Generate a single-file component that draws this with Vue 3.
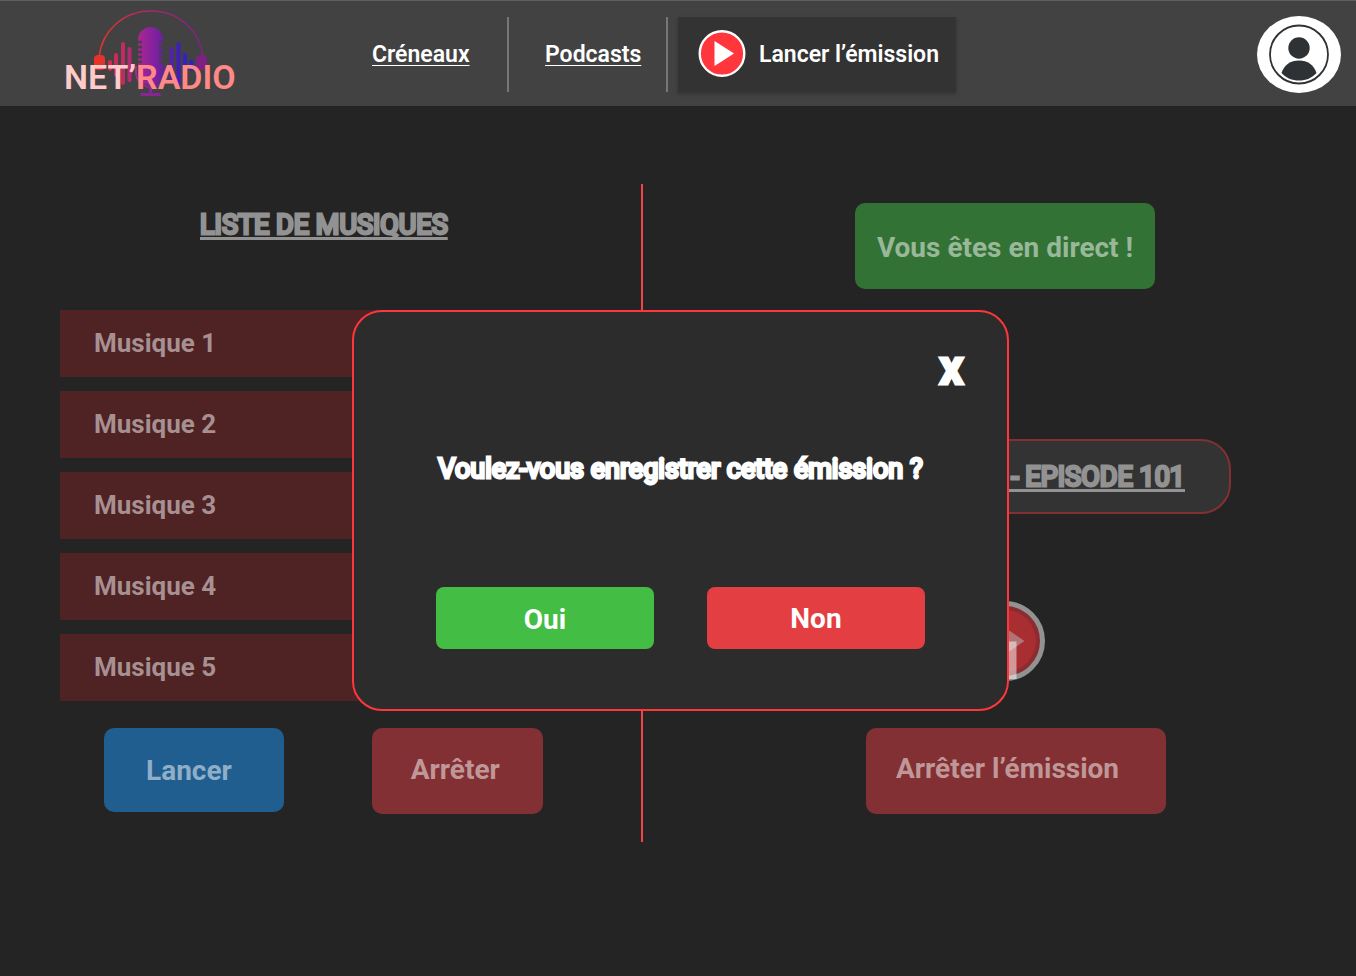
<script setup>
const tracks = ['Musique 1', 'Musique 2', 'Musique 3', 'Musique 4', 'Musique 5']
</script>

<template>
  <div class="app">
    <header class="topbar">
      <a class="logo" href="#" aria-label="NET’RADIO">
        <svg class="logo-art" viewBox="0 0 113 90" aria-hidden="true">
          <defs>
            <linearGradient id="band" x1="0" x2="1" y1="0" y2="0">
              <stop offset="0" stop-color="#e8332c" />
              <stop offset="0.5" stop-color="#a8286c" />
              <stop offset="1" stop-color="#7a2383" />
            </linearGradient>
            <linearGradient id="mic" x1="0" x2="1" y1="0" y2="0">
              <stop offset="0" stop-color="#ab2690" />
              <stop offset="1" stop-color="#6a1fa6" />
            </linearGradient>
          </defs>
          <path d="M5 48C8 22 29 2 57 2s49 20 52 46" fill="none" stroke="url(#band)" stroke-width="1.6" />
          <rect x="0" y="46" width="11" height="15" rx="4" fill="#e5322c" />
          <rect x="102" y="46" width="11" height="15" rx="4" fill="#7d2180" />
          <g stroke-width="4" stroke-linecap="round">
            <path d="M16 53v7" stroke="#cf2d4c" />
            <path d="M22 46v20" stroke="#c52c59" />
            <path d="M29 35v39" stroke="#be2b67" />
            <path d="M35.500 40v31" stroke="#b42a72" />
            <path d="M77.500 40v31" stroke="#5520ae" />
            <path d="M84.500 35v39" stroke="#401fb9" />
            <path d="M91 46v20" stroke="#3420c5" />
            <path d="M97.500 53v7" stroke="#2a20d0" />
          </g>
          <path d="M44 31a12.500 13 0 0 1 25 0v33a12.500 12 0 0 1-25 0z" fill="url(#mic)" />
          <path d="M43 33h5M43 38h5M43 43h5M43 48h5M43 53h5M65 33h5M65 38h5M65 43h5M65 48h5M65 53h5" stroke="#424242" stroke-width="2.300" />
          <path d="M42 57v6a14.500 15 0 0 0 29 0v-6" fill="none" stroke="url(#mic)" stroke-width="2" />
          <path d="M55 77h3v7h8l1 3H46l1-3h8z" fill="#8a2398" />
        </svg>
        <span class="logo-text"><span class="logo-net">NET’</span>RADIO</span>
      </a>
      <nav class="nav">
        <a class="nav-link first" href="#">Créneaux</a>
        <a class="nav-link second" href="#">Podcasts</a>
      </nav>
      <button class="start" type="button">
        <svg class="start-icon" viewBox="0 0 48 48" aria-hidden="true">
          <circle cx="24" cy="23.500" r="22.300" fill="#ff373d" stroke="#fff" stroke-width="2.400" />
          <path d="M16.500 11 36 23.500 16.500 36z" fill="#fff" />
        </svg>
        Lancer l’émission
      </button>
      <button class="avatar" type="button" aria-label="Mon compte">
        <svg viewBox="0 0 84 77" aria-hidden="true">
          <ellipse cx="42" cy="38.500" rx="42" ry="38.500" fill="#fff" />
          <circle cx="42" cy="38.500" r="29" fill="none" stroke="#2e3235" stroke-width="1.800" />
          <circle cx="42" cy="32" r="10.700" fill="#2e3235" />
          <path d="M24.500 57C27 49 33.500 44.500 42 44.500S57 49 59.500 57C55 62 49 64.500 42 64.500S29 62 24.500 57z" fill="#2e3235" />
        </svg>
      </button>
    </header>

    <main class="studio">
      <section class="panel music">
        <h2 class="title">LISTE DE MUSIQUES</h2>
        <ul class="tracks">
          <li v-for="track in tracks" :key="track" class="track">{{ track }}</li>
        </ul>
        <div class="controls">
          <button class="btn play" type="button">Lancer</button>
          <button class="btn stop" type="button">Arrêter</button>
        </div>
      </section>

      <section class="panel live">
        <p class="status">Vous êtes en direct !</p>
        <h2 class="episode"><span class="title">&nbsp;- EPISODE 101</span></h2>
        <svg class="live-icon" viewBox="0 0 80 80" aria-hidden="true">
          <circle cx="40" cy="40" r="37.500" fill="#8d2c30" stroke="#929292" stroke-width="5" />
          <circle cx="40" cy="40" r="31" fill="#a92e32" />
          <path d="M30 20 59.500 40 30 60z" fill="#b17476" />
          <path d="M42 40.500h9.500V78H42z" fill="#fff" fill-opacity="0.500" />
        </svg>
        <button class="btn end" type="button">Arrêter l’émission</button>
      </section>

      <div class="overlay">
        <div class="dialog" role="dialog" aria-labelledby="question">
          <button class="close" type="button">X</button>
          <p id="question" class="question">Voulez-vous enregistrer cette émission ?</p>
          <div class="answers">
            <button class="answer yes" type="button">Oui</button>
            <button class="answer no" type="button">Non</button>
          </div>
        </div>
      </div>
    </main>
  </div>
</template>

<style>
body {
  background: #242424;
}
</style>

<style scoped>
.app {
  min-height: 100vh;
  background: #242424;
  color: #fff;
  font-family: Roboto, "Liberation Sans", sans-serif;
  font-weight: 700;
}
.app *,
.app {
  box-sizing: border-box;
}
button {
  border: 0;
  font: inherit;
  color: inherit;
  cursor: pointer;
}
h2,
p,
ul {
  margin: 0;
  padding: 0;
  font-size: inherit;
  font-weight: inherit;
}
.topbar {
  display: flex;
  align-items: center;
  height: 106px;
  padding: 1px 15px 0 64px;
  background: #424242;
  border-top: 1px solid #5e6060;
  font-weight: 600;
}
.logo {
  display: grid;
  width: 174px;
  color: #ff8989;
  text-decoration: none;
}
.logo-art {
  grid-area: 1 / 1;
  width: 113px;
  height: 90px;
  margin: 0 0 0 30px;
}
.logo-text {
  grid-area: 1 / 1;
  z-index: 1;
  align-self: end;
  padding-bottom: 2px;
  font-size: 34px;
  line-height: 40px;
}
.logo-net {
  color: #ffcaca;
}
.nav {
  display: flex;
  height: 75px;
  margin-left: 134px;
}
.nav-link {
  display: flex;
  align-items: center;
  border-right: 2px solid #777;
  color: #fff;
  font-size: 23px;
  text-underline-offset: 3px;
  text-decoration-thickness: 1px;
}
.first {
  width: 137px;
}
.second {
  width: 159px;
  padding-left: 36px;
}
.start {
  display: flex;
  align-items: center;
  gap: 13px;
  height: 75px;
  margin-left: 10px;
  padding: 0 17px 0 20px;
  background: #333;
  box-shadow: 0 2px 4px rgba(0, 0, 0, 0.25);
  font-size: 23px;
}
.start-icon {
  width: 48px;
  height: 48px;
}
.avatar {
  width: 84px;
  height: 77px;
  margin-left: auto;
  padding: 0;
  background: none;
}
.studio {
  position: relative;
  display: grid;
  grid-template-columns: 643fr 713fr;
  padding: 78px 0 134px;
}
.panel {
  display: flex;
  flex-direction: column;
}
.music {
  padding: 23px 60px 28px 60px;
  border-right: 2px solid #f24448;
}
.title {
  color: #929292;
  font-size: 27px;
  font-weight: 400;
  line-height: 36px;
  -webkit-text-stroke: 3px #929292;
  text-decoration: underline;
  text-decoration-thickness: 3px;
  text-decoration-skip-ink: none;
  text-underline-offset: 3px;
}
.music .title {
  margin-left: 140px;
}
.tracks {
  display: grid;
  gap: 14px;
  margin-top: 67px;
  list-style: none;
}
.track {
  height: 67px;
  padding-left: 34px;
  background: #4f2224;
  color: #a79091;
  font-size: 26px;
  line-height: 66px;
}
.controls {
  display: flex;
  gap: 88px;
  margin: 27px 0 0 44px;
}
.btn {
  height: 86px;
  border-radius: 10px;
  background: #823033;
  color: #c09799;
  font-size: 28px;
}
.play {
  height: 84px;
  padding: 0 52px 0 42px;
  background: #205e90;
  color: #8faec7;
}
.stop {
  padding: 0 43px 4px 39px;
}
.live {
  align-items: center;
  padding: 19px 0 28px 11px;
}
.status {
  width: 300px;
  height: 86px;
  border-radius: 10px;
  background: #337235;
  color: #99b89a;
  font-size: 28px;
  line-height: 90px;
  text-align: center;
}
.episode {
  display: flex;
  align-items: center;
  justify-content: flex-end;
  width: 452px;
  height: 75px;
  margin-top: 150px;
  padding-right: 44px;
  border: 2px solid #823033;
  border-radius: 30px;
  background: #333;
}
.live-icon {
  width: 80px;
  height: 80px;
  margin-top: 87px;
}
.end {
  width: 300px;
  margin: 47px 0 0 22px;
  padding: 0 0 6px 30px;
  text-align: left;
}
.overlay {
  position: absolute;
  inset: 204px 0 auto 5px;
  display: flex;
  justify-content: center;
}
.dialog {
  display: flex;
  flex-direction: column;
  width: 657px;
  padding: 38px 42px 60px;
  border: 2px solid #ff373d;
  border-radius: 30px;
  background: #2c2c2c;
}
.close {
  align-self: flex-end;
  padding: 0 2px;
  background: none;
  font-size: 36px;
  font-weight: 900;
  line-height: 44px;
  -webkit-text-stroke: 3px #fff;
}
.question {
  margin-top: 57px;
  font-size: 27px;
  font-weight: 400;
  line-height: 36px;
  text-align: center;
  -webkit-text-stroke: 3px #fff;
}
.answers {
  display: flex;
  gap: 53px;
  margin-top: 100px;
  padding: 0 40px;
}
.answer {
  flex: 1;
  height: 62px;
  border-radius: 8px;
  font-size: 28px;
}
.yes {
  padding-top: 4px;
  background: #43bd43;
}
.no {
  background: #e33e42;
}
</style>
